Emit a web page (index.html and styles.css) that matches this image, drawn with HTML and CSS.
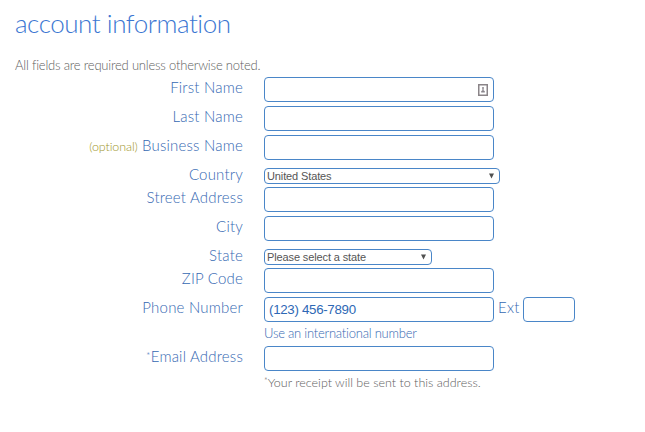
FILE: index.html
```html
<!DOCTYPE html>
<html lang="en">
<head>
<meta charset="utf-8">
<title>Account information</title>
<link rel="stylesheet" href="styles.css">
</head>
<body>
<main>
<h1>account information</h1>
<p class="intro">All fields are required unless otherwise noted.</p>
<form>
<div class="row"><label>First Name</label><div class="box"><svg class="card" width="10" height="12" viewBox="0 0 10 12"><rect x=".75" y=".75" width="8.5" height="10.5" fill="#fff" stroke="#8a8488" stroke-width="1.5"/><circle cx="5" cy="4" r="1" fill="#8a858c"/><path d="M4.4 5h1.2v1.4l1.2.6v1.4H3.2V7l1.2-.6z" fill="#8a858c"/></svg></div></div>
<div class="row"><label>Last Name</label><div class="box"></div></div>
<div class="row"><label><span class="optional">(optional)</span> Business Name</label><div class="box"></div></div>
<div class="row short"><label>Country</label><div class="select"><span>United States</span><svg class="arrow" width="5" height="6" viewBox="0 0 6 6"><path d="M0 0h6L3 6z" fill="#505050"/></svg></div></div>
<div class="row"><label>Street Address</label><div class="box"></div></div>
<div class="row"><label>City</label><div class="box"></div></div>
<div class="row short"><label>State</label><div class="select state"><span>Please select a state</span><svg class="arrow" width="5" height="6" viewBox="0 0 6 6"><path d="M0 0h6L3 6z" fill="#505050"/></svg></div></div>
<div class="row"><label>ZIP Code</label><div class="box"></div></div>
<div class="row"><label>Phone Number</label><div class="box phone">(123) 456-7890</div><label class="ext">Ext</label><div class="box small"></div></div>
<a class="link">Use an international number</a>
<div class="row"><label><span class="star">*</span>Email Address</label><div class="box"></div></div>
<p class="note"><span class="star">*</span>Your receipt will be sent to this address.</p>
</form>
</main>
</body>
</html>
```
FILE: styles.css
```css
* { box-sizing: border-box; }
body { margin: 0; background: #fff; font-family: Lato, sans-serif; font-weight: 300; font-variant-ligatures: none; color: #606060; }
main { padding-top: 8px; }
h1 { margin: 0 0 0 15px; height: 47px; font-size: 26px; line-height: 31px; font-weight: 300; letter-spacing: -.46px; color: #3b76d2; white-space: nowrap; }
.intro { margin: 0 0 0 15px; height: 22px; font-size: 13px; line-height: 20px; letter-spacing: -.2px; white-space: nowrap; }
.row { display: flex; align-items: flex-start; height: 29px; }
.row > label { width: 243px; margin-right: 21px; text-align: right; font-size: 15px; line-height: 20px; letter-spacing: .2px; color: #3568b2; white-space: nowrap; }
.row > label .optional { font-size: 12.5px; letter-spacing: -.1px; color: #a0962a; }
.box { display: flex; align-items: center; width: 230px; height: 25px; border: 1px solid #4a86c8; border-radius: 4px; padding: 0 5px; font: 13.3px "Liberation Sans", sans-serif; color: #2e68b5; }
.phone { padding-left: 4px; letter-spacing: -.3px; }
.card { margin-left: auto; }
.row.short { height: 23px; padding-top: 4px; }
.short > label { line-height: 13px; }
.select { display: flex; align-items: center; justify-content: space-between; width: 236px; height: 16px; border: 1px solid #4a86c8; border-radius: 4px; padding: 0 5px 0 2px; font: 11px "Liberation Sans", sans-serif; letter-spacing: -.12px; color: #555; }
.state { width: 168px; }
.row > .ext { width: 21px; margin: 0 4px 0 4px; text-align: left; }
.box.small { width: 52px; }
.link { display: block; height: 20px; margin-left: 264px; font-size: 13px; line-height: 15px; letter-spacing: -.23px; color: #3568b2; }
.note { margin: 0 0 0 264px; font-size: 12.5px; line-height: 15px; white-space: nowrap; }
.star { font-size: .7em; line-height: 0; vertical-align: 3px; }
```
